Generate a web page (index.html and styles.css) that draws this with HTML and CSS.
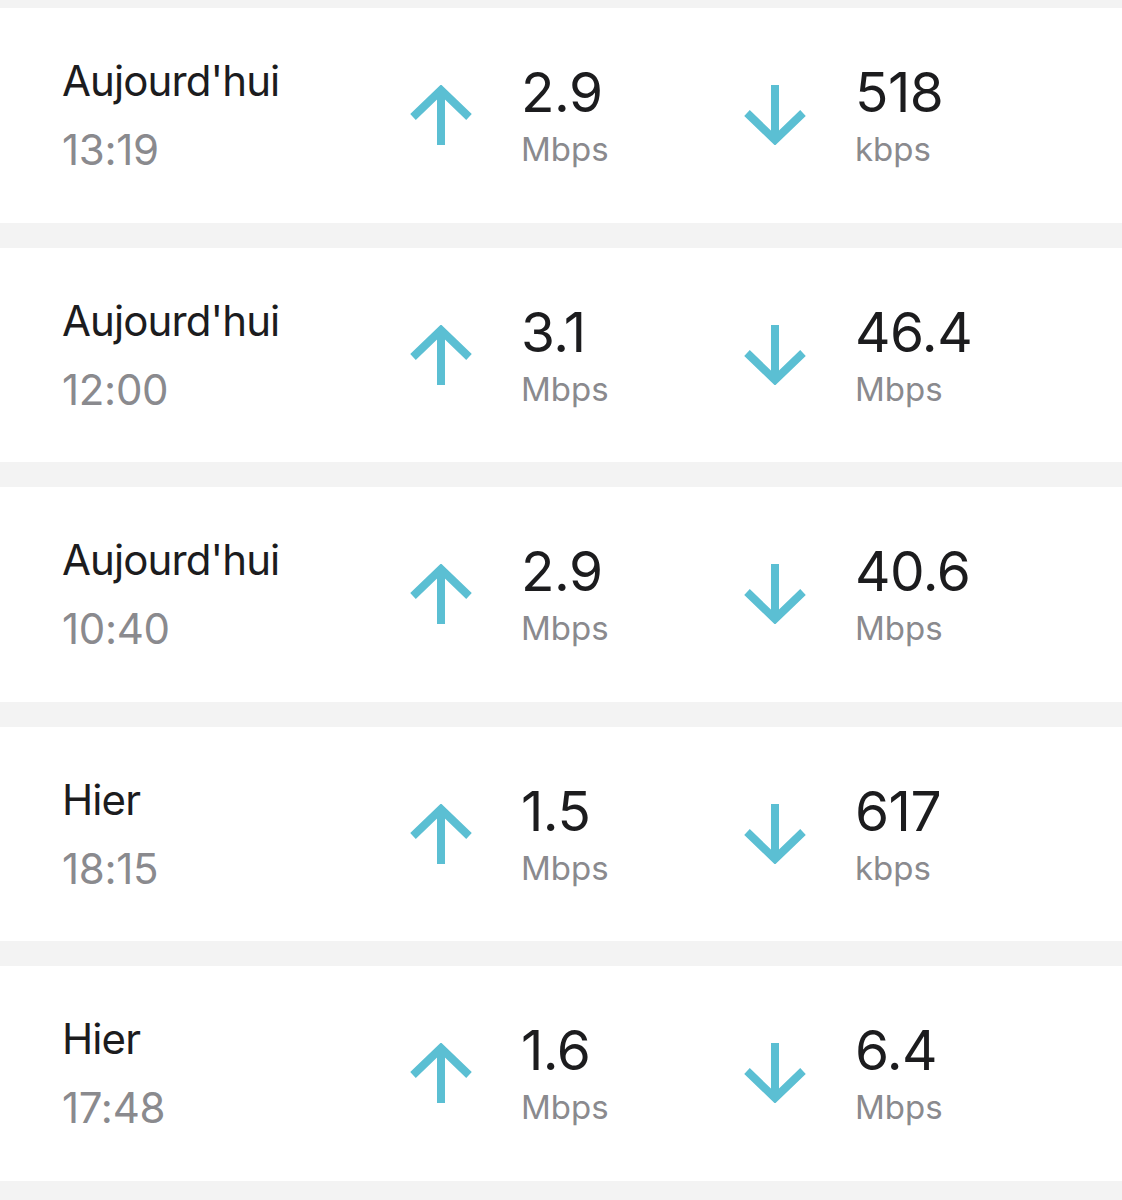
FILE: index.html
```html
<!DOCTYPE html>
<html lang="fr">
<head>
  <meta charset="UTF-8">
  <meta name="viewport" content="width=device-width, initial-scale=1.0">
  <title>Historique des tests</title>
  <link rel="stylesheet" href="styles.css">
</head>
<body>
  <div class="list">

    <div class="card">
      <div class="when">
        <div class="day">Aujourd'hui</div>
        <div class="time">13:19</div>
      </div>
      <svg class="arrow" viewBox="0 0 64 60"><path d="M32 60V5M4 32L32 5L60 32"/></svg>
      <div class="speed">
        <div class="value">2.9</div>
        <div class="unit">Mbps</div>
      </div>
      <svg class="arrow" viewBox="0 0 64 60"><path d="M32 0V55M4 28L32 55L60 28"/></svg>
      <div class="speed">
        <div class="value">518</div>
        <div class="unit">kbps</div>
      </div>
    </div>

    <div class="card">
      <div class="when">
        <div class="day">Aujourd'hui</div>
        <div class="time">12:00</div>
      </div>
      <svg class="arrow" viewBox="0 0 64 60"><path d="M32 60V5M4 32L32 5L60 32"/></svg>
      <div class="speed">
        <div class="value">3.1</div>
        <div class="unit">Mbps</div>
      </div>
      <svg class="arrow" viewBox="0 0 64 60"><path d="M32 0V55M4 28L32 55L60 28"/></svg>
      <div class="speed">
        <div class="value">46.4</div>
        <div class="unit">Mbps</div>
      </div>
    </div>

    <div class="card">
      <div class="when">
        <div class="day">Aujourd'hui</div>
        <div class="time">10:40</div>
      </div>
      <svg class="arrow" viewBox="0 0 64 60"><path d="M32 60V5M4 32L32 5L60 32"/></svg>
      <div class="speed">
        <div class="value">2.9</div>
        <div class="unit">Mbps</div>
      </div>
      <svg class="arrow" viewBox="0 0 64 60"><path d="M32 0V55M4 28L32 55L60 28"/></svg>
      <div class="speed">
        <div class="value">40.6</div>
        <div class="unit">Mbps</div>
      </div>
    </div>

    <div class="card">
      <div class="when">
        <div class="day">Hier</div>
        <div class="time">18:15</div>
      </div>
      <svg class="arrow" viewBox="0 0 64 60"><path d="M32 60V5M4 32L32 5L60 32"/></svg>
      <div class="speed">
        <div class="value">1.5</div>
        <div class="unit">Mbps</div>
      </div>
      <svg class="arrow" viewBox="0 0 64 60"><path d="M32 0V55M4 28L32 55L60 28"/></svg>
      <div class="speed">
        <div class="value">617</div>
        <div class="unit">kbps</div>
      </div>
    </div>

    <div class="card">
      <div class="when">
        <div class="day">Hier</div>
        <div class="time">17:48</div>
      </div>
      <svg class="arrow" viewBox="0 0 64 60"><path d="M32 60V5M4 32L32 5L60 32"/></svg>
      <div class="speed">
        <div class="value">1.6</div>
        <div class="unit">Mbps</div>
      </div>
      <svg class="arrow" viewBox="0 0 64 60"><path d="M32 0V55M4 28L32 55L60 28"/></svg>
      <div class="speed">
        <div class="value">6.4</div>
        <div class="unit">Mbps</div>
      </div>
    </div>

  </div>
</body>
</html>
```

FILE: styles.css
```css
body {
  margin: 0;
  background-color: #f3f3f3; /* light grey gutter between cards */
  font-family: Inter, "Noto Sans", sans-serif;
  color: #1c1c1e;
}
.list {
  display: flex;
  flex-direction: column;
  gap: 25px;
  padding-top: 8px;
}
.card {
  display: flex;
  align-items: center;
  height: 214.5px;
  padding-left: 62px;
  background-color: #ffffff;
}
.when {
  width: 347px;
  font-size: 42px;
  line-height: 69px;
  letter-spacing: -0.9px;
}
.time {
  color: #8a8a8e;
  letter-spacing: -0.3px;
}
.arrow {
  width: 64px;
  height: 60px;
  margin-right: 48px;
  flex-shrink: 0;
}
.arrow path {
  fill: none;
  stroke: #5bbfd3; /* teal arrows */
  stroke-width: 8;
}
.speed {
  width: 222px;
}
.value {
  font-size: 55px;
  line-height: 69px;
  letter-spacing: -0.5px;
}
.unit {
  font-size: 33px;
  line-height: 45px;
  color: #8a8a8e;
}
```
